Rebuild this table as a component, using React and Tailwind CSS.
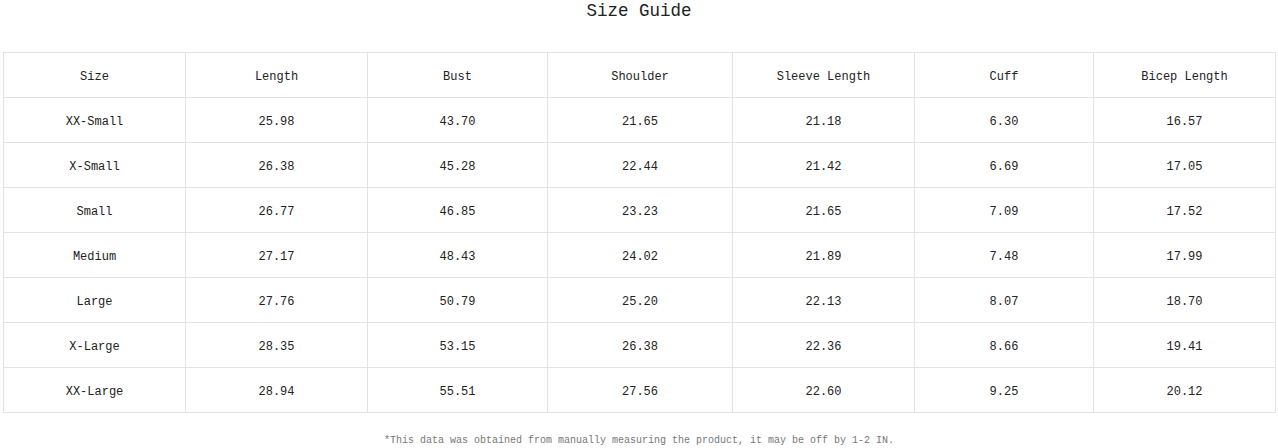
const headers = ["Size", "Length", "Bust", "Shoulder", "Sleeve Length", "Cuff", "Bicep Length"];
const widths = ["w-[182px]", "w-[182px]", "w-[180px]", "w-[185px]", "w-[182px]", "w-[179px]", "w-[182px]"];

const rows = [
  ["XX-Small", "25.98", "43.70", "21.65", "21.18", "6.30", "16.57"],
  ["X-Small", "26.38", "45.28", "22.44", "21.42", "6.69", "17.05"],
  ["Small", "26.77", "46.85", "23.23", "21.65", "7.09", "17.52"],
  ["Medium", "27.17", "48.43", "24.02", "21.89", "7.48", "17.99"],
  ["Large", "27.76", "50.79", "25.20", "22.13", "8.07", "18.70"],
  ["X-Large", "28.35", "53.15", "26.38", "22.36", "8.66", "19.41"],
  ["XX-Large", "28.94", "55.51", "27.56", "22.60", "9.25", "20.12"],
];

export default function App() {
  return (
    <div className="w-[1278px] h-[448px] bg-white text-[#222] font-['Liberation_Mono',monospace]">
      <h1 className="h-[22px] leading-[22px] text-center text-[17.5px]">Size Guide</h1>

      <table className="mt-[30px] ml-[3px] border-collapse table-fixed w-[1272px] text-[12px]">
        <colgroup>
          {widths.map((w, i) => (
            <col key={i} className={w} />
          ))}
        </colgroup>
        <thead>
          <tr>
            {headers.map((h) => (
              <th key={h} className="h-[45px] pt-[4px] border border-[#e3e3e3] font-normal text-center align-middle">
                {h}
              </th>
            ))}
          </tr>
        </thead>
        <tbody>
          {rows.map((r) => (
            <tr key={r[0]}>
              {r.map((c, i) => (
                <td key={i} className="h-[45px] pt-[4px] border border-[#e3e3e3] text-center align-middle">
                  {c}
                </td>
              ))}
            </tr>
          ))}
        </tbody>
      </table>

      <p className="mt-[21px] leading-[14px] text-center text-[10px] text-[#777]">
        *This data was obtained from manually measuring the product, it may be off by 1-2 IN.
      </p>
    </div>
  );
}
